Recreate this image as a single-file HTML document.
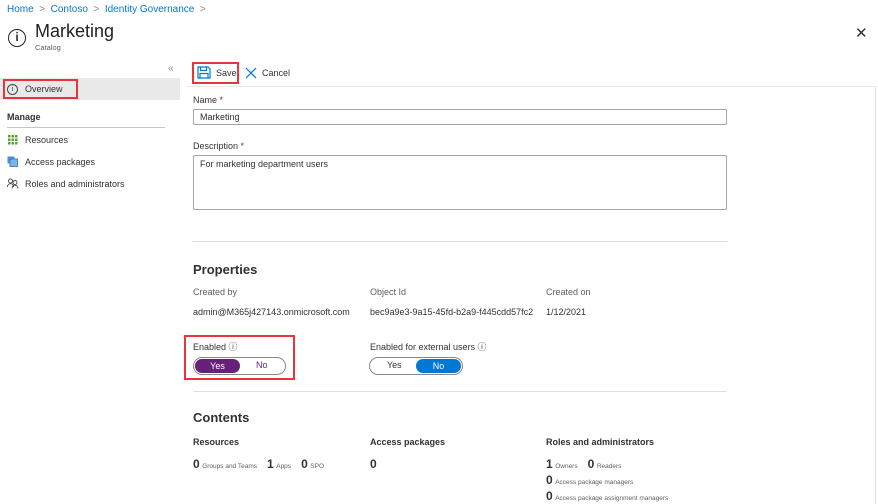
<!DOCTYPE html>
<html><head><meta charset="utf-8"><style>
*{box-sizing:border-box;margin:0;padding:0}
body{width:878px;height:504px;overflow:hidden;background:#fff;font-family:"Liberation Sans",sans-serif;color:#323130;position:relative;font-size:9px}
.a{position:absolute;white-space:nowrap}
.blue{color:#0078d4}
.red{border:2px solid #e8353a}
.lbl{font-size:9px;color:#323130}
.b{font-weight:bold}
.big{font-size:12px;font-weight:bold}
.sm{font-size:6.5px;color:#605e5c}
.input{position:absolute;border:1px solid #a6a6a6;border-radius:2px;padding:3px 6px;font-size:9px}
.hr{position:absolute;height:1px;background:#e1dfdd}
</style></head><body>
<div class="a blue" style="left:7px;top:4px;font-size:10px">Home &nbsp;<span style="color:#888">&gt;</span>&nbsp; Contoso &nbsp;<span style="color:#888">&gt;</span>&nbsp; Identity Governance &nbsp;<span style="color:#888">&gt;</span></div>
<div class="a" style="left:8px;top:29px;width:18px;height:18px;border:1.6px solid #222;border-radius:50%;text-align:center;font-size:12px;line-height:15px;font-weight:bold">i</div>
<div class="a" style="left:35px;top:21px;font-size:18px;color:#222">Marketing</div>
<div class="a" style="left:35px;top:43px;font-size:7.5px;color:#605e5c">Catalog</div>
<div class="a" style="left:855px;top:24px;font-size:15px;color:#333">✕</div>
<div class="a" style="left:168px;top:63px;color:#888;font-size:10px">«</div>
<div class="a" style="left:0;top:78px;width:180px;height:22px;background:#e9e9e9"></div>
<div class="a red" style="left:3px;top:79px;width:75px;height:20px"></div>
<div class="a" style="left:7px;top:84px;width:11px;height:11px;border:1px solid #444;border-radius:50%;font-size:7px;text-align:center;line-height:9px">i</div>
<div class="a" style="left:25px;top:84px;font-size:9px">Overview</div>
<div class="a b" style="left:7px;top:112px;font-size:9px">Manage</div>
<div class="hr" style="left:7px;top:127px;width:158px;background:#c8c6c4"></div>
<svg class="a" style="left:8px;top:135px" width="10" height="10"><g fill="#5ea031"><rect x="0" y="0" width="2.5" height="2.5"/><rect x="3.5" y="0" width="2.5" height="2.5"/><rect x="7" y="0" width="2.5" height="2.5"/><rect x="0" y="3.5" width="2.5" height="2.5"/><rect x="3.5" y="3.5" width="2.5" height="2.5"/><rect x="7" y="3.5" width="2.5" height="2.5"/><rect x="0" y="7" width="2.5" height="2.5"/><rect x="3.5" y="7" width="2.5" height="2.5"/><rect x="7" y="7" width="2.5" height="2.5"/></g></svg>
<div class="a" style="left:25px;top:135px">Resources</div>
<svg class="a" style="left:7px;top:156px" width="11" height="11"><rect x="0.5" y="0.5" width="7" height="7" fill="#4a90d9"/><rect x="3" y="3" width="7.5" height="7.5" fill="#7fb3e8" stroke="#2f73c0" stroke-width="0.8"/></svg>
<div class="a" style="left:25px;top:157px">Access packages</div>
<svg class="a" style="left:7px;top:178px" width="12" height="11" fill="none" stroke="#444" stroke-width="0.9"><circle cx="3.5" cy="3" r="2"/><path d="M0.5 9c0-2 1.3-3.3 3-3.3s3 1.3 3 3.3"/><circle cx="8" cy="4.5" r="2"/><path d="M5 10.5c0-2 1.3-3.3 3-3.3s3 1.3 3 3.3"/></svg>
<div class="a" style="left:25px;top:179px">Roles and administrators</div>
<div class="a red" style="left:192px;top:62px;width:47px;height:22px"></div>
<svg class="a" style="left:197px;top:66px" width="14" height="13" fill="none" stroke="#0078d4" stroke-width="1.2"><path d="M1 1h10l2 2v9H1z"/><path d="M3.5 1v3.5h6V1"/><path d="M3 12V7.5h8V12"/></svg>
<div class="a" style="left:216px;top:68px;font-size:9px">Save</div>
<svg class="a" style="left:245px;top:67px" width="12" height="12" stroke="#0078d4" stroke-width="1.2"><path d="M1 1l10 10M11 1L1 11"/></svg>
<div class="a" style="left:262px;top:68px;font-size:9px">Cancel</div>
<div class="hr" style="left:187px;top:86px;width:689px;background:#e8e8e8"></div>
<div class="a" style="left:875px;top:86px;width:1px;height:418px;background:#e1dfdd"></div>
<div class="a lbl" style="left:193px;top:95px">Name <span style="color:#a4262c">*</span></div>
<div class="input" style="left:193px;top:109px;width:534px;height:16px;padding-top:2px">Marketing</div>
<div class="a lbl" style="left:193px;top:141px">Description <span style="color:#a4262c">*</span></div>
<div class="input" style="left:193px;top:155px;width:534px;height:55px">For marketing department users</div>
<div class="hr" style="left:193px;top:241px;width:534px"></div>
<div class="a" style="left:193px;top:262px;font-size:13px;font-weight:bold">Properties</div>
<div class="a lbl" style="left:193px;top:287px;color:#605e5c">Created by</div>
<div class="a lbl" style="left:370px;top:287px;color:#605e5c">Object Id</div>
<div class="a lbl" style="left:546px;top:287px;color:#605e5c">Created on</div>
<div class="a lbl" style="left:193px;top:307px">admin@M365j427143.onmicrosoft.com</div>
<div class="a lbl" style="left:370px;top:307px">bec9a9e3-9a15-45fd-b2a9-f445cdd57fc2</div>
<div class="a lbl" style="left:546px;top:307px">1/12/2021</div>
<div class="a red" style="left:184px;top:335px;width:111px;height:45px"></div>
<div class="a lbl" style="left:193px;top:340px">Enabled ⓘ</div>
<div class="a" style="left:193px;top:357px;width:93px;height:18px;border:1px solid #8a8886;border-radius:9px"></div>
<div class="a" style="left:195px;top:359px;width:45px;height:14px;background:#68217a;border-radius:7px;color:#fff;text-align:center;line-height:14px">Yes</div>
<div class="a" style="left:256px;top:360px;color:#68217a">No</div>
<div class="a lbl" style="left:370px;top:340px">Enabled for external users ⓘ</div>
<div class="a" style="left:369px;top:357px;width:94px;height:18px;border:1px solid #8a8886;border-radius:9px"></div>
<div class="a" style="left:387px;top:360px">Yes</div>
<div class="a" style="left:416px;top:359px;width:45px;height:14px;background:#0078d4;border-radius:7px;color:#fff;text-align:center;line-height:14px">No</div>
<div class="hr" style="left:193px;top:391px;width:534px"></div>
<div class="a" style="left:193px;top:410px;font-size:13px;font-weight:bold">Contents</div>
<div class="a b" style="left:193px;top:437px">Resources</div>
<div class="a b" style="left:370px;top:437px">Access packages</div>
<div class="a b" style="left:546px;top:437px">Roles and administrators</div>
<div class="a" style="left:193px;top:457px"><span class="big">0</span> <span class="sm">Groups and Teams</span> &nbsp;&nbsp; <span class="big">1</span> <span class="sm">Apps</span> &nbsp;&nbsp; <span class="big">0</span> <span class="sm">SPO</span></div>
<div class="a" style="left:370px;top:457px"><span class="big">0</span></div>
<div class="a" style="left:546px;top:457px"><span class="big">1</span> <span class="sm">Owners</span> &nbsp;&nbsp; <span class="big">0</span> <span class="sm">Readers</span></div>
<div class="a" style="left:546px;top:473px"><span class="big">0</span> <span class="sm">Access package managers</span></div>
<div class="a" style="left:546px;top:489px"><span class="big">0</span> <span class="sm">Access package assignment managers</span></div>
</body></html>
